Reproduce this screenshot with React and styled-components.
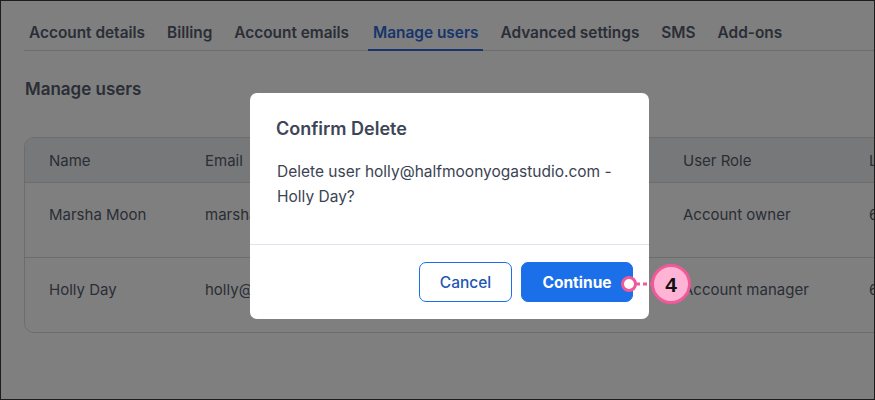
import React from "react";
import styled, { createGlobalStyle } from "styled-components";

const Global = createGlobalStyle`
  html, body { margin: 0; padding: 0; background: #fff; }
  body { font-family: "Inter", "Noto Sans", sans-serif; }
  * { box-sizing: border-box; }
`;

const Frame = styled.div`
  position: relative;
  width: 875px;
  height: 400px;
  overflow: hidden;
  border: 1px solid #1c1c1c;
  background: #ffffff;
`;

const Page = styled.div`
  padding: 0 0 0 23px;
  display: flex;
  flex-direction: column;
`;

const Tabs = styled.nav`
  display: flex;
  gap: 12px;
  margin-top: 14px;
  border-bottom: 1px solid #d8dbe0;
  height: 36px;
  align-items: stretch;
`;

const Tab = styled.div`
  padding: 8px 5px 0;
  margin-left: ${(p) => (p.$shift ? 2 : 0)}px;
  font-size: 15.4px;
  font-weight: 600;
  color: ${(p) => (p.$active ? "#2f6ad9" : "#545c6c")};
  border-bottom: 2px solid ${(p) => (p.$active ? "#2f6ad9" : "transparent")};
  margin-bottom: -1px;
  white-space: nowrap;
`;

const Heading = styled.h2`
  margin: 28px 0 0 1px;
  font-size: 17px;
  font-weight: 600;
  color: #545c6c;
`;

const Table = styled.div`
  margin-top: 38px;
  width: 900px;
  border: 1px solid #d5d8dd;
  border-radius: 10px;
  overflow: hidden;
`;

const Row = styled.div`
  display: grid;
  grid-template-columns: 156px 478px 186px 1fr;
  align-items: center;
  height: ${(p) => (p.$head ? 44 : 75)}px;
  padding-left: 24px;
  padding-bottom: ${(p) => (p.$head ? 0 : 12)}px;
  background: ${(p) => (p.$head ? "#eef0f3" : "#ffffff")};
  border-top: ${(p) => (p.$first ? "none" : "1px solid #d5d8dd")};
  font-size: 15px;
  color: #545c6c;
`;

const Cell = styled.div`
  white-space: nowrap;
  overflow: hidden;
`;

const Overlay = styled.div`
  position: absolute;
  inset: 0;
  background: rgba(0, 0, 0, 0.5);
`;

const Modal = styled.div`
  position: absolute;
  left: 249px;
  top: 92px;
  width: 399px;
  height: 226px;
  background: #fff;
  border-radius: 7px;
  display: flex;
  flex-direction: column;
`;

const ModalBody = styled.div`
  padding: 25px 25px 0 26px;
  height: 152px;
  border-bottom: 1px solid #dfe4ee;
`;

const ModalTitle = styled.div`
  font-size: 18px;
  font-weight: 600;
  color: #3d4557;
  margin-bottom: 20px;
`;

const ModalText = styled.div`
  font-size: 15.5px;
  line-height: 25px;
  color: #3b4352;
  padding-left: 1px;
`;

const Footer = styled.div`
  display: flex;
  justify-content: flex-end;
  gap: 9px;
  padding: 17px 16px 0 0;
`;

const Button = styled.button`
  height: 40px;
  border-radius: 7px;
  font-family: inherit;
  font-size: 15.5px;
  padding: 0;
  width: ${(p) => p.$w}px;
  cursor: pointer;
  ${(p) =>
    p.$primary
      ? `background:#1b6fe8;color:#fff;border:1px solid #1b6fe8;font-weight:700;`
      : `background:#fff;color:#1f55b4;border:1px solid #1b6fe8;font-weight:500;`}
`;

const Marker = styled.svg`
  position: absolute;
  left: 617px;
  top: 262px;
`;

export default function App() {
  return (
    <>
      <Global />
      <Frame>
        <Page>
          <Tabs>
            <Tab>Account details</Tab>
            <Tab>Billing</Tab>
            <Tab>Account emails</Tab>
            <Tab $active $shift>Manage users</Tab>
            <Tab>Advanced settings</Tab>
            <Tab>SMS</Tab>
            <Tab>Add-ons</Tab>
          </Tabs>
          <Heading>Manage users</Heading>
          <Table>
            <Row $head $first>
              <Cell>Name</Cell>
              <Cell>Email</Cell>
              <Cell>User Role</Cell>
              <Cell>Last</Cell>
            </Row>
            <Row>
              <Cell>Marsha Moon</Cell>
              <Cell>marsha@halfmoonyogastudio.com</Cell>
              <Cell>Account owner</Cell>
              <Cell>6</Cell>
            </Row>
            <Row>
              <Cell>Holly Day</Cell>
              <Cell>holly@halfmoonyogastudio.com</Cell>
              <Cell>Account manager</Cell>
              <Cell>6</Cell>
            </Row>
          </Table>
        </Page>
        <Overlay />
        <Modal>
          <ModalBody>
            <ModalTitle>Confirm Delete</ModalTitle>
            <ModalText>
              Delete user holly@halfmoonyogastudio.com -<br />
              Holly Day?
            </ModalText>
          </ModalBody>
          <Footer>
            <Button $w={93}>Cancel</Button>
            <Button $primary $w={112}>Continue</Button>
          </Footer>
        </Modal>
        <Marker width="80" height="44" viewBox="0 0 80 44">
          <line x1="18" y1="21" x2="33" y2="21" stroke="#ef5a98" strokeWidth="3" strokeDasharray="4 3" />
          <circle cx="11" cy="21" r="6.5" fill="#fff" stroke="#ef5a98" strokeWidth="3" />
          <circle cx="53" cy="21" r="18.5" fill="#ffb4d6" stroke="#ef5a98" strokeWidth="3" />
          <text x="53" y="28.5" textAnchor="middle" fontFamily="Liberation Sans, Arial, sans-serif" fontWeight="700" fontSize="21" fill="#111">4</text>
        </Marker>
      </Frame>
    </>
  );
}
